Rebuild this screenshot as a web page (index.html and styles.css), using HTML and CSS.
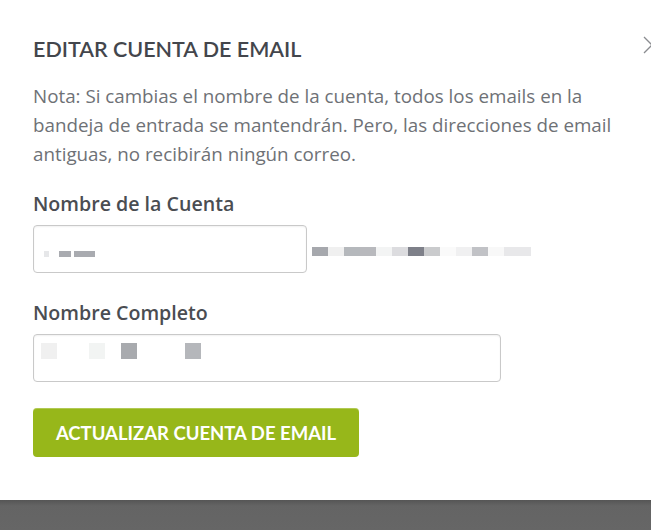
FILE: index.html
```html
<!DOCTYPE html>
<html lang="es">
<head>
  <meta charset="UTF-8">
  <title>Editar cuenta de email</title>
  <link rel="stylesheet" href="styles.css">
</head>
<body>

  <div class="modal">
    <!-- close arrow, partially off screen -->
    <span class="close-btn">
      <svg width="12" height="18" viewBox="0 0 12 18"><path d="M1 1 L9 9 L1 17" fill="none" stroke="#8a8c90" stroke-width="1.3"/></svg>
    </span>

    <h2 class="modal-title">EDITAR CUENTA DE EMAIL</h2>
    <p class="note">Nota: Si cambias el nombre de la cuenta, todos los emails en la bandeja de entrada se mantendrán. Pero, las direcciones de email antiguas, no recibirán ningún correo.</p>

    <form class="edit-form" onsubmit="return false;">
      <label>Nombre de la Cuenta</label>
      <div class="field-row">
        <div class="field field-short">
          <span class="blur-text">
            <i class="px w5 c1"></i><i class="px w10 gap"></i><i class="px w12 c3"></i><i class="px w3 gap"></i><i class="px w4 c3"></i><i class="px w17 c3"></i>
          </span>
        </div>
        <span class="blur-text domain">
          <i class="px w16" style="background:#a6a8ad"></i><i class="px w16" style="background:#f0f0f0"></i><i class="px w16" style="background:#b5b8bc"></i><i class="px w16" style="background:#b8b9bd"></i><i class="px w16" style="background:#f3f4f4"></i><i class="px w16" style="background:#dcdcdf"></i><i class="px w16" style="background:#7e8089"></i><i class="px w16" style="background:#cacbcd"></i><i class="px w16" style="background:#fafafa"></i><i class="px w16" style="background:#f0f0f1"></i><i class="px w16" style="background:#c1c2c6"></i><i class="px w16" style="background:#f8f8f8"></i><i class="px w27" style="background:#e8e8ea"></i>
        </span>
      </div>

      <label>Nombre Completo</label>
      <div class="field field-long">
        <span class="blur-text tall">
          <i class="px w16" style="background:#f0f0f0"></i><i class="px w32"></i><i class="px w16" style="background:#f2f4f3"></i><i class="px w16"></i><i class="px w16" style="background:#a8aaae"></i><i class="px w48"></i><i class="px w16" style="background:#b5b7bb"></i>
        </span>
      </div>

      <button type="submit">ACTUALIZAR CUENTA DE EMAIL</button>
    </form>
  </div>

  <div class="backdrop"></div>

</body>
</html>
```

FILE: styles.css
```css
/* General Styling */
body {
  margin: 0;
  background-color: #fff;
  font-family: "Open Sans", Arial, sans-serif;
  overflow: hidden;
}

/* Modal */
.modal {
  position: relative;
  height: 500px;
  box-sizing: border-box;
  padding: 35px 0 0 33px;
  background-color: #fff;
}

.close-btn {
  position: absolute;
  top: 36px;
  left: 643px;
  display: block;
}

.modal-title {
  margin: 0;
  font-family: "Lato", sans-serif;
  font-weight: 600;
  font-size: 21.5px;
  line-height: 28px;
  color: #43464c;
}

.note {
  width: 610px;
  margin: 19px 0 0;
  font-size: 18.8px;
  line-height: 29px;
  color: #6e7176;
}

/* Form */
.edit-form {
  display: flex;
  flex-direction: column;
  align-items: flex-start;
  margin-top: 21px;
}

label {
  font-weight: 600;
  font-size: 19.6px;
  line-height: 28px;
  color: #4a4d52;
}

.field-row {
  display: flex;
  align-items: center;
  margin-top: 7px;
}

.field {
  display: flex;
  align-items: center;
  height: 48px;
  box-sizing: border-box;
  padding: 0 10px;
  border: 1px solid #c9c9c9;
  border-radius: 4px;
  box-shadow: inset 0 1px 2px rgba(0, 0, 0, 0.06);
}

.field-short {
  width: 274px;
}

.field-long {
  width: 468px;
  margin: 7px 0 0;
  padding: 0 7px;
}

.field-row + label {
  margin-top: 26px;
}

/* blurred (pixelated) private text */
.blur-text {
  display: flex;
  height: 6px;
  margin-top: 9px;
}

.blur-text.tall {
  height: 16px;
  margin-top: -14px;
}

.blur-text.domain {
  margin-left: 5px;
  height: 9px;
  margin-top: 5px;
}

.px {
  display: block;
  height: 100%;
}

.w3 { width: 3px; }
.w4 { width: 4px; }
.w5 { width: 5px; }
.w10 { width: 10px; }
.w12 { width: 12px; }
.w16 { width: 16px; }
.w17 { width: 17px; }
.w27 { width: 27px; }
.w32 { width: 32px; }
.w48 { width: 48px; }
.c1 { background: #e6e7e9; }
.c3 { background: #a9abb0; }

button {
  margin-top: 26px;
  width: 326px;
  height: 49px;
  border: none;
  border-radius: 4px;
  background-color: #97b71a;
  box-shadow: inset 0 1px 0 rgba(255, 255, 255, 0.25);
  color: #fff;
  font-family: "Lato", sans-serif;
  font-weight: 700;
  font-size: 18.5px;
  cursor: pointer;
}

/* page behind the modal */
.backdrop {
  height: 30px;
  background: linear-gradient(#555 0, #646464 6px, #666 100%);
}
```
